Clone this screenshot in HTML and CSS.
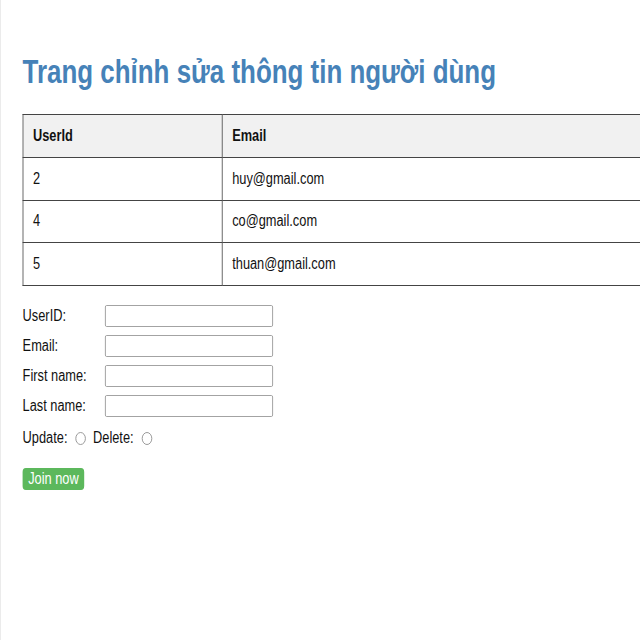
FILE: index.html
```html
<!DOCTYPE html>
<html lang="vi">
<head>
<meta charset="utf-8">
<link rel="stylesheet" href="styles.css">
</head>
<body>
<div class="frame">
<div class="page">
  <h1 class="title">Trang chỉnh sửa thông tin người dùng</h1>
  <table class="users">
    <thead>
      <tr><th class="col-id">UserId</th><th>Email</th></tr>
    </thead>
    <tbody>
      <tr><td>2</td><td>huy@gmail.com</td></tr>
      <tr><td>4</td><td>co@gmail.com</td></tr>
      <tr><td>5</td><td>thuan@gmail.com</td></tr>
    </tbody>
  </table>
  <form class="form">
    <div class="row"><label class="lbl">UserID:</label><input class="field" type="text"></div>
    <div class="row"><label class="lbl">Email:</label><input class="field" type="text"></div>
    <div class="row"><label class="lbl">First name:</label><input class="field" type="text"></div>
    <div class="row"><label class="lbl">Last name:</label><input class="field" type="text"></div>
    <div class="radios">
      <span>Update:</span><span class="radio"></span>
      <span>Delete:</span><span class="radio"></span>
    </div>
    <button class="btn" type="button">Join now</button>
  </form>
</div>
</div>
</body>
</html>
```
FILE: styles.css
```css
html, body {
  margin: 0;
  padding: 0;
  background: #fff;
  overflow: hidden;
}
body {
  font-family: "Liberation Sans", Arial, sans-serif;
  color: #111;
  font-size: 16px;
}
.frame {
  width: 639px;
  height: 640px;
  border-left: 1px solid #ebebeb;
  overflow: hidden;
}
.page {
  width: 800px;
  box-sizing: border-box;
  padding-left: 27px;
  transform: scaleX(0.8);
  transform-origin: 0 0;
}
.title {
  margin: 0;
  padding-top: 53px;
  font-size: 32.4px;
  line-height: 38px;
  font-weight: bold;
  color: #4682b8;
  height: 61px;
}
.users {
  border-collapse: collapse;
  width: 820px;
}
.users th, .users td {
  border: 1px solid #444;
  text-align: left;
  padding: 0 11px 0 12px;
  height: 41.75px;
  font-size: 16px;
}
.users th {
  background: #f1f1f1;
  font-weight: bold;
}
.col-id {
  width: 225px;
}
.form {
  padding-top: 19px;
}
.row {
  display: flex;
  align-items: center;
  height: 22px;
  margin-bottom: 8px;
}
.lbl {
  width: 103px;
  font-size: 16px;
}
.field {
  width: 210px;
  height: 22px;
  box-sizing: border-box;
  border: 1px solid #999;
  border-radius: 2px;
  margin: 0;
  padding: 0;
}
.radios {
  display: flex;
  align-items: center;
  margin-top: 11px;
  height: 20px;
}
.radio {
  display: inline-block;
  width: 11px;
  height: 11px;
  border: 1px solid #8f8f8f;
  border-radius: 50%;
  margin: 0 9px 0 10px;
}
.btn {
  display: block;
  margin-top: 20px;
  background: #5cb85c;
  color: #fff;
  border: none;
  border-radius: 4px;
  font-family: "Liberation Sans", Arial, sans-serif;
  font-size: 16px;
  padding: 0 7px;
  height: 22px;
  line-height: 22px;
}
```
